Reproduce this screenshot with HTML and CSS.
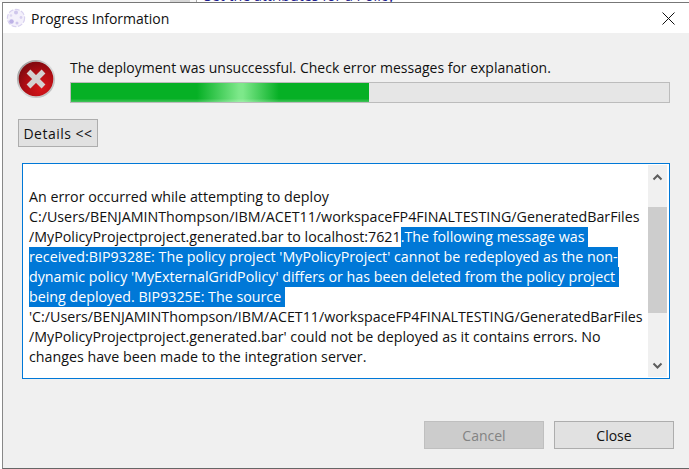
FILE: index.html
```html
<!DOCTYPE html>
<html lang="en">
<head>
<meta charset="utf-8">
<title>Progress Information</title>
<link rel="stylesheet" href="styles.css">
</head>
<body>
<div class="behind"><div class="behind-text">Set the attributes for a Policy</div></div>
<div class="window">
  <header class="titlebar">
    <svg class="app-icon" width="20" height="20" viewBox="0 0 20 20" aria-hidden="true">
      <circle cx="10" cy="10" r="8.6" fill="#f4f1fb" stroke="#d9d2f0" stroke-width="1.2" stroke-dasharray="5 1.5"/>
      <circle cx="10" cy="4.5" r="2" fill="#cfc6ec"/>
      <circle cx="15" cy="9.5" r="1.4" fill="#d8d0f0"/>
      <circle cx="5.5" cy="13.5" r="2.3" fill="#bdb2e6"/>
      <circle cx="11" cy="15" r="1.5" fill="#cfc6ec"/>
      <circle cx="5" cy="7.5" r="1.3" fill="#ddd6f2"/>
    </svg>
    <span class="title">Progress Information</span>
    <svg class="close-x" width="13" height="13" viewBox="0 0 13 13" aria-hidden="true">
      <path d="M0.5 0.5L12.5 12.5M12.5 0.5L0.5 12.5" stroke="#111" stroke-width="1" fill="none"/>
    </svg>
  </header>
  <main class="body">
    <section class="status">
      <svg class="error-icon" width="40" height="40" viewBox="0 0 40 40" aria-hidden="true">
        <defs>
          <radialGradient id="red" cx="65%" cy="75%" r="70%">
            <stop offset="0" stop-color="#d8141a"/>
            <stop offset="0.6" stop-color="#b20d13"/>
            <stop offset="1" stop-color="#860a10"/>
          </radialGradient>
          <linearGradient id="ring" x1="0" y1="0" x2="1" y2="1">
            <stop offset="0" stop-color="#8d8d8d"/>
            <stop offset="0.5" stop-color="#dcdcdc"/>
            <stop offset="1" stop-color="#b5b5b5"/>
          </linearGradient>
        </defs>
        <circle cx="20" cy="20" r="18.2" fill="url(#red)" stroke="url(#ring)" stroke-width="1.8"/>
        <path d="M12.5 12.5L27.5 27.5M27.5 12.5L12.5 27.5" stroke="#d4d0d0" stroke-width="5.4" stroke-linecap="butt" fill="none"/>
      </svg>
      <div class="status-main">
        <div class="message">The deployment was unsuccessful. Check error messages for explanation.</div>
        <div class="progress"><div class="progress-fill"></div></div>
      </div>
    </section>
    <button class="btn details" type="button">Details &lt;&lt;</button>
    <section class="log">
      <div class="log-text">
        <div class="line">&nbsp;</div>
        <div class="line">An error occurred while attempting to deploy</div>
        <div class="line">C:/Users/BENJAMINThompson/IBM/ACET11/workspaceFP4FINALTESTING/GeneratedBarFiles</div>
        <div class="line">/MyPolicyProjectproject.generated.bar to localhost:7621<span class="sel">.The following message was </span></div>
        <div class="line"><span class="sel">received:BIP9328E: The policy project 'MyPolicyProject' cannot be redeployed as the non-</span></div>
        <div class="line"><span class="sel">dynamic policy 'MyExternalGridPolicy' differs or has been deleted from the policy project </span></div>
        <div class="line"><span class="sel">being deployed. BIP9325E: The source </span></div>
        <div class="line">'C:/Users/BENJAMINThompson/IBM/ACET11/workspaceFP4FINALTESTING/GeneratedBarFiles</div>
        <div class="line">/MyPolicyProjectproject.generated.bar' could not be deployed as it contains errors. No</div>
        <div class="line">changes have been made to the integration server.</div>
      </div>
      <div class="scrollbar">
        <svg class="arrow" width="19" height="25" viewBox="0 0 19 25" aria-hidden="true"><path d="M5.5 14.5L9.5 10.5L13.5 14.5" stroke="#5d5d5d" stroke-width="2" fill="none"/></svg>
        <div class="thumb"></div>
        <svg class="arrow arrow-down" width="19" height="25" viewBox="0 0 19 25" aria-hidden="true"><path d="M5.5 11.5L9.5 15.5L13.5 11.5" stroke="#5d5d5d" stroke-width="2" fill="none"/></svg>
      </div>
    </section>
    <footer class="actions">
      <button class="btn action" type="button" disabled>Cancel</button>
      <button class="btn action" type="button">Close</button>
    </footer>
  </main>
</div>
</body>
</html>
```
FILE: styles.css
```css
* { box-sizing: border-box; }
html, body { margin: 0; height: 100%; }
body {
  width: 689px;
  height: 469px;
  overflow: hidden;
  background: #fff;
  font-family: "Open Sans", "Noto Sans", sans-serif;
  color: #111;
}
.behind {
  height: 2px;
  overflow: hidden;
  padding-left: 204px;
  background: linear-gradient(to right, #f7f7f7 170px, #d6d6d6 170px, #d6d6d6 190px, #f7f7f7 190px, #f7f7f7 196px, #a8a8a8 196px, #a8a8a8 197px, #fff 197px);
}
.behind-text {
  margin-top: -14px;
  font-size: 14.2px;
  line-height: 20px;
  color: #1d1d8f;
  white-space: nowrap;
}
.window {
  height: 467px;
  margin-left: 2px;
  border-top: 1px solid #777;
  border-left: 1px solid #888;
  border-bottom: 1px solid #666;
  background: #f0f0f0;
  display: flex;
  flex-direction: column;
}
.titlebar {
  height: 30px;
  flex: none;
  background: #fff;
  display: flex;
  align-items: center;
  padding: 0 14px 0 3px;
}
.app-icon { flex: none; }
.title {
  margin-left: 5px;
  font-size: 14px;
  color: #111;
}
.close-x { margin-left: auto; }
.body {
  flex: 1;
  display: flex;
  flex-direction: column;
  padding-left: 15px;
}
.status {
  display: flex;
  padding-top: 25px;
  height: 86px;
  flex: none;
}
.error-icon { flex: none; margin: 1px 0 0 -2px; }
.status-main { margin-left: 14px; width: 600px; }
.message {
  font-size: 14px;
  line-height: 20px;
  height: 24px;
}
.progress {
  height: 21px;
  border: 1px solid #bcbcbc;
  background: #e6e6e6;
}
.progress-fill {
  width: 298px;
  height: 100%;
  background:
    linear-gradient(to bottom, rgba(255,255,255,0) 82%, rgba(255,255,255,.25) 100%),
    linear-gradient(to right, #06b025 0, #06b025 126px, #7de88a 168px, #7de88a 172px, #06b025 208px, #06b025 100%);
}
.btn {
  font-family: inherit;
  font-size: 14px;
  color: #111;
  background: #e1e1e1;
  border: 1px solid #adadad;
  padding: 0;
}
.details {
  width: 80px;
  height: 28px;
  flex: none;
  letter-spacing: 0.5px;
}
.log {
  flex: none;
  width: 648px;
  height: 216px;
  margin: 16px 0 0 4px;
  border: 1px solid #0078d7;
  background: #fff;
  display: flex;
  padding: 1px 2px 1px 0;
}
.log-text {
  flex: 1;
  min-width: 0;
  padding: 2px 0 0 6px;
  font-size: 14.25px;
  line-height: 20px;
}
.line { height: 20px; white-space: pre; }
.sel {
  display: inline-block;
  white-space: pre;
  background: #0078d7;
  color: #fff;
}
.scrollbar {
  flex: none;
  width: 19px;
  background: #f0f0f0;
  display: flex;
  flex-direction: column;
}
.arrow { display: block; flex: none; }
.thumb {
  height: 106px;
  margin-top: 17px;
  background: #cdcdcd;
}
.arrow-down { margin-top: auto; }
.actions {
  display: flex;
  gap: 10px;
  justify-content: flex-end;
  margin: 42px 0 0;
  width: 656px;
}
.action {
  width: 120px;
  height: 28px;
}
.action:disabled {
  background: #ccc;
  border-color: #bfbfbf;
  color: #838383;
}
```
